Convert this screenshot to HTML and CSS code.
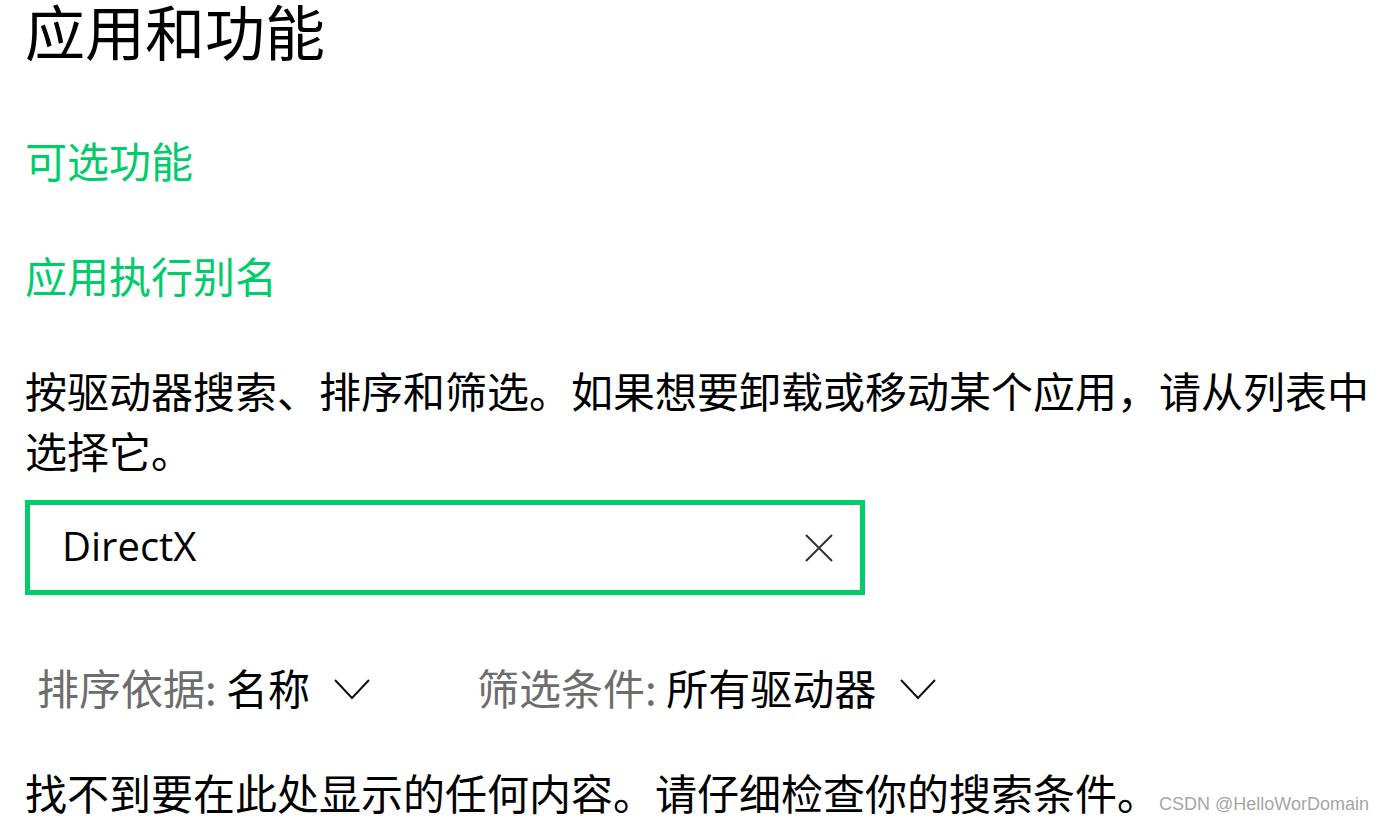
FILE: index.html
```html
<!DOCTYPE html>
<html lang="zh-CN">
<head>
<meta charset="utf-8">
<title>应用和功能</title>
<link rel="stylesheet" href="styles.css">
</head>
<body>
<main class="page">
  <h1 class="title">应用和功能</h1>
  <a class="link link-first" href="#">可选功能</a>
  <a class="link link-second" href="#">应用执行别名</a>
  <p class="desc">按驱动器搜索、排序和筛选。如果想要卸载或移动某个应用，请从列表中选择它。</p>
  <div class="search">
    <span class="search-text">DirectX</span>
    <svg class="clear" width="28" height="28" viewBox="0 0 28 28" aria-hidden="true">
      <path d="M1 1 L27 27 M27 1 L1 27" stroke="#333" stroke-width="2" fill="none"/>
    </svg>
  </div>
  <div class="filters">
    <div class="filter filter-sort">
      <span class="filter-text"><span class="filter-label">排序依据:</span> 名称</span>
      <svg class="chev" width="36" height="21" viewBox="0 0 36 21" aria-hidden="true">
        <path d="M1 1 L18 19 L35 1" stroke="#111" stroke-width="2" fill="none"/>
      </svg>
    </div>
    <div class="filter">
      <span class="filter-text"><span class="filter-label">筛选条件:</span> 所有驱动器</span>
      <svg class="chev" width="36" height="21" viewBox="0 0 36 21" aria-hidden="true">
        <path d="M1 1 L18 19 L35 1" stroke="#111" stroke-width="2" fill="none"/>
      </svg>
    </div>
  </div>
  <div class="empty-row">
    <p class="empty">找不到要在此处显示的任何内容。请仔细检查你的搜索条件。</p>
    <span class="watermark">CSDN @HelloWorDomain</span>
  </div>
</main>
</body>
</html>
```

FILE: styles.css
```css
html, body {
  margin: 0;
  padding: 0;
  background: #ffffff;
}

body {
  font-family: "Noto Sans CJK SC", "Noto Sans", sans-serif;
  color: #000;
  overflow: hidden;
  width: 1384px;
  height: 827px;
}

.page {
  display: flex;
  flex-direction: column;
  align-items: flex-start;
  padding-left: 25px;
  padding-top: 4px;
}

.title {
  margin: 0;
  font-size: 60px;
  line-height: 60px;
  font-weight: 400;
  margin-top: -4px;
}

.link {
  display: block;
  font-size: 42px;
  line-height: 60px;
  color: #00cc6a;
  text-decoration: none;
}

.link-first {
  margin-top: 70px;
}

.link-second {
  margin-top: 55px;
}

.desc {
  margin: 55px 0 0;
  width: 1359px;
  font-size: 42px;
  line-height: 60px;
}

.search {
  margin-top: 20px;
  box-sizing: border-box;
  width: 840px;
  height: 95px;
  border: 5px solid #00cc6a;
  display: flex;
  align-items: center;
  justify-content: space-between;
  padding: 0 27px 0 32px;
}

.search-text {
  font-family: "Open Sans", "Noto Sans", sans-serif;
  font-size: 40px;
  line-height: 50px;
  color: #000;
  margin-top: -4px;
}

.clear {
  display: block;
  margin-top: 1px;
}

.filters {
  margin-top: 62px;
  display: flex;
  align-items: center;
  gap: 107px;
  padding-left: 12px;
}

.filter {
  display: flex;
  align-items: center;
  gap: 24px;
}

.filter-text {
  font-size: 42px;
  line-height: 60px;
  color: #000;
  white-space: nowrap;
}

.filter-label {
  color: #6d6d6d;
}

.chev {
  display: block;
  margin-top: 4px;
}

.empty-row {
  margin-top: 45px;
  width: 1343px;
  display: flex;
  align-items: baseline;
  justify-content: space-between;
}

.empty {
  margin: 0;
  font-size: 42px;
  line-height: 60px;
  white-space: nowrap;
}

.watermark {
  flex-shrink: 0;
  white-space: nowrap;
  font-family: "Liberation Sans", Arial, sans-serif;
  font-size: 18px;
  color: #a6a6a6;
}
```
